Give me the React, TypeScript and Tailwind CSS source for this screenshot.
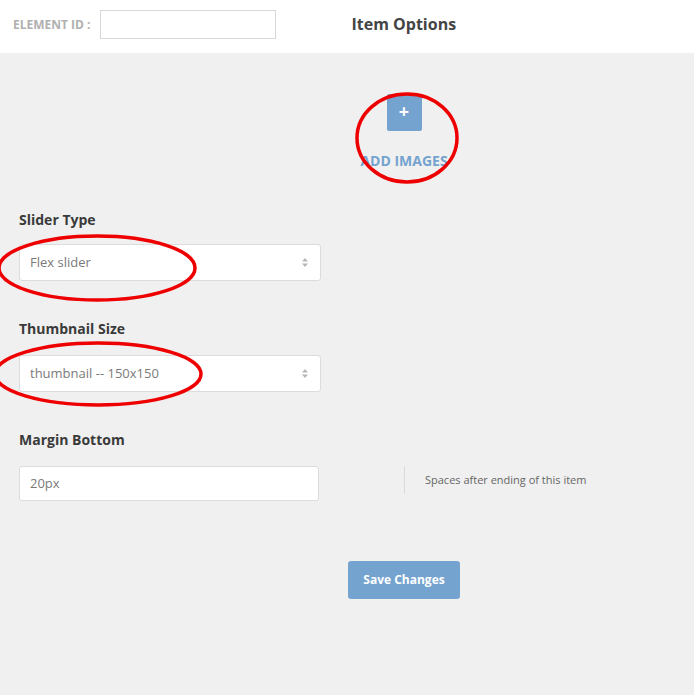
const font = { fontFamily: '"Open Sans", "Liberation Sans", sans-serif' };

function SelectBox({ value }: { value: string }) {
  return (
    <div className="flex items-center justify-between w-[302px] h-[37px] bg-white border border-[#dcdcdc] rounded-[3px] pl-[10px] pr-[10px]">
      <span className="text-[13px] text-[#7a7a7a]">{value}</span>
      <svg width="8" height="11" viewBox="0 0 8 11" className="mr-[1px]">
        <path d="M4 1 L7 4.5 L1 4.5 Z" fill="#b5b5b5" />
        <path d="M4 10 L7 6.5 L1 6.5 Z" fill="#b5b5b5" />
      </svg>
    </div>
  );
}

function Label({ children }: { children: string }) {
  return <div className="text-[14px] font-bold text-[#3a3a3a] leading-none">{children}</div>;
}

export default function App() {
  return (
    <div className="relative w-[694px] h-[695px] bg-[#f0f0f0] overflow-hidden" style={font}>
      <div className="flex items-start h-[53px] bg-white pt-[10px]">
        <span className="ml-[13px] mt-[6px] text-[12px] font-bold text-[#b0b0b0]">ELEMENT ID :</span>
        <div className="ml-[10px] w-[176px] h-[29px] border border-[#d8d8d8] bg-white" />
        <span className="ml-[75px] mt-[2px] text-[16px] font-bold text-[#444]">Item Options</span>
      </div>

      <div className="flex flex-col items-center pt-[41px] pl-[114px]">
        <div className="flex items-center justify-center w-[35px] h-[37px] rounded-[2px] bg-[#74a3cf] text-white text-[18px] font-bold leading-none pb-[3px]">
          +
        </div>
        <div className="mt-[23px] text-[14px] font-bold text-[#74a3cf] leading-none">ADD IMAGES</div>
      </div>

      <div className="flex flex-col pl-[19px] pt-[45px]">
        <Label>Slider Type</Label>
        <div className="mt-[17px]">
          <SelectBox value="Flex slider" />
        </div>

        <div className="mt-[41px]">
          <Label>Thumbnail Size</Label>
        </div>
        <div className="mt-[19px]">
          <SelectBox value="thumbnail -- 150x150" />
        </div>

        <div className="mt-[41px]">
          <Label>Margin Bottom</Label>
        </div>
        <div className="flex items-start mt-[19px]">
          <div className="flex items-center w-[300px] h-[35px] bg-white border border-[#dcdcdc] rounded-[3px] pl-[10px]">
            <span className="text-[13px] text-[#7a7a7a]">20px</span>
          </div>
          <div className="ml-[85px] w-px h-[28px] bg-[#dadada]" />
          <span className="ml-[20px] mt-[6px] text-[11px] text-[#666]">Spaces after ending of this item</span>
        </div>
      </div>

      <div className="flex justify-center pt-[60px] pl-[114px]">
        <div className="flex items-center justify-center w-[112px] h-[38px] rounded-[3px] bg-[#74a3cf] text-white text-[12px] font-bold">
          Save Changes
        </div>
      </div>

      <svg className="absolute inset-0 pointer-events-none" width="694" height="695">
        <ellipse cx="407" cy="138" rx="50" ry="44" fill="none" stroke="#ee0000" strokeWidth="3.5" />
        <ellipse cx="97" cy="268" rx="98" ry="32" fill="none" stroke="#ee0000" strokeWidth="3.5" />
        <ellipse cx="98" cy="374" rx="103" ry="31" fill="none" stroke="#ee0000" strokeWidth="3.5" />
      </svg>
    </div>
  );
}
